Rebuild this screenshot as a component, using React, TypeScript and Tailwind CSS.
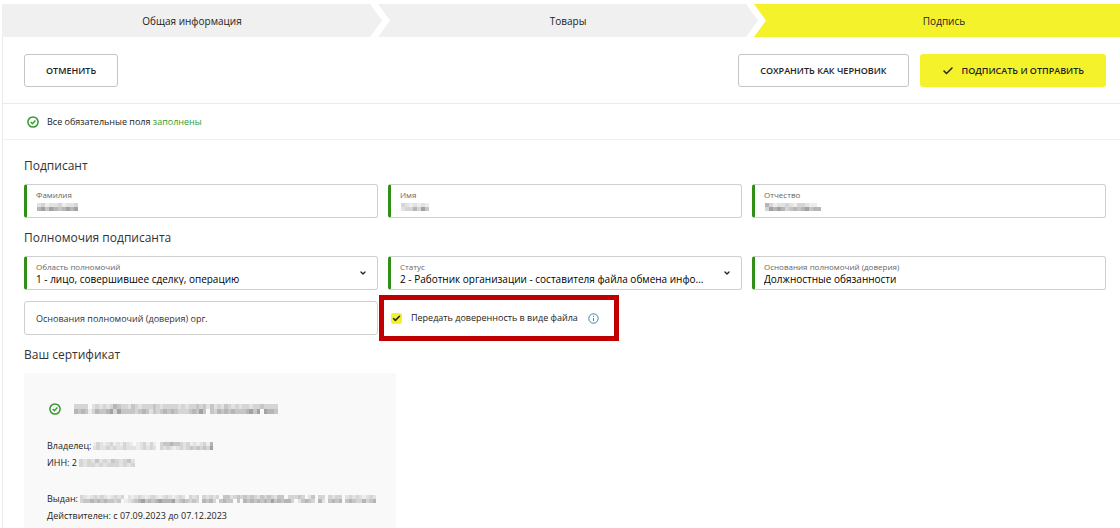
import React, { useId, useState } from "react";
import { Check, ChevronDown } from "lucide-react";

const STEPS = ["Общая информация", "Товары", "Подпись"];

// one digit per mosaic cell, 0 = empty, 7 = darkest
const MASKS = {
  surname: ["2312231223", "5646545656"],
  firstName: ["3212121", "2335364"],
  patronymic: ["53122321332110", "36565345456455"],
  certificate: [
    "333302323235433243233343233332323343424232432323323343333",
    "545413544563644443454243454543334546404354545444564606554",
  ],
  owner: ["132123121321012313103445443231212315", "232232322322212323203232123234343436"],
  inn: ["32324232432342", "32332323332323"],
  issuer: [
    "321232321232302123212321232123203230323230442343434324343244033343024033032330232321232",
    "344545454434012345645456555634543430545304544040545454546454553024543052045450454335345",
  ],
};

const SHADES: Record<string, string> = {
  "1": "#ededed",
  "2": "#e2e2e2",
  "3": "#d5d5d5",
  "4": "#c6c6c6",
  "5": "#b6b6b6",
  "6": "#a2a2a2",
  "7": "#909090",
};

function Mosaic({ rows, width, height = 8 }: { rows: string[]; width: number; height?: number }) {
  return (
    <svg
      width={width}
      height={height}
      viewBox={`0 0 ${rows[0].length} ${rows.length}`}
      preserveAspectRatio="none"
      shapeRendering="crispEdges"
      className="shrink-0"
      aria-hidden="true"
    >
      {rows.map((row, y) =>
        row.split("").map((c, x) => (c === "0" ? null : <rect key={`${x}-${y}`} x={x} y={y} width="1" height="1" fill={SHADES[c]} />)),
      )}
    </svg>
  );
}

function OkIcon() {
  return (
    <svg width="12" height="12" viewBox="0 0 12 12" fill="none" stroke="#35992b" className="shrink-0" aria-hidden="true">
      <circle cx="6" cy="6" r="5.1" strokeWidth="1.5" />
      <path d="M3.7 6.1 5.4 7.7 8.4 4.6" strokeWidth="1.4" />
    </svg>
  );
}

function Steps() {
  return (
    <nav className="overflow-hidden pt-1">
      <ol className="-mr-[14px] flex">
        {STEPS.map((step, i) => {
          const first = i === 0;
          const active = i === STEPS.length - 1;
          return (
            <li
              key={step}
              className={`flex h-[33px] flex-1 items-center justify-center ${active ? "bg-[#f4f22b]" : "-mr-1 bg-[#f0f0f0]"} ${
                first
                  ? "[clip-path:polygon(0_0,calc(100%-12px)_0,100%_50%,calc(100%-12px)_100%,0_100%)]"
                  : "[clip-path:polygon(0_0,calc(100%-12px)_0,100%_50%,calc(100%-12px)_100%,0_100%,12px_50%)]"
              }`}
            >
              {step}
            </li>
          );
        })}
      </ol>
    </nav>
  );
}

type FieldProps = {
  label: string;
  value?: string;
  select?: boolean;
  mask?: string[];
  maskWidth?: number;
};

function Field({ label, value = "", select, mask, maskWidth = 0 }: FieldProps) {
  const id = useId();
  const control = "h-3 w-full appearance-none bg-transparent p-0 text-[10px] leading-3 text-black outline-none";
  return (
    <div className="relative flex h-[34px] min-w-0 flex-col justify-center rounded-[3px] border border-l-[3px] border-[#cfcfcf] border-l-[#2f8f17] pl-[9px] pr-2">
      <label htmlFor={id} className="text-[8px] leading-3 text-[#666]">
        {label}
      </label>
      {select ? (
        <>
          <select id={id} className={control} defaultValue={value}>
            <option>{value}</option>
          </select>
          <ChevronDown className="pointer-events-none absolute right-[10px] top-3 size-2" strokeWidth={4} aria-hidden="true" />
        </>
      ) : (
        <input id={id} className={control} defaultValue={value} />
      )}
      {mask && (
        <span className="pointer-events-none absolute left-[10px] top-[18px]">
          <Mosaic rows={mask} width={maskWidth} />
        </span>
      )}
    </div>
  );
}

function Heading({ children }: { children: React.ReactNode }) {
  return <h2 className="text-[12px] leading-5 text-[#333]">{children}</h2>;
}

export default function App() {
  const [asFile, setAsFile] = useState(true);
  const button = "flex h-[33px] items-center justify-center rounded-[3px] text-[9px] font-semibold";

  return (
    <div className="bg-white pl-[2px] font-['Open_Sans','Noto_Sans',sans-serif] text-[10px] leading-4 text-[#222]">
      <Steps />
      <main className="border-l border-[#ebebeb]">
        <div className="flex items-center gap-[11px] border-b border-[#ebebeb] pb-4 pl-[21px] pr-[14px] pt-[17px]">
          <button type="button" className={`${button} mr-auto border border-[#c4c4c4] px-[21px]`}>
            ОТМЕНИТЬ
          </button>
          <button type="button" className={`${button} border border-[#c4c4c4] px-[21px]`}>
            СОХРАНИТЬ КАК ЧЕРНОВИК
          </button>
          <button type="button" className={`${button} gap-2 bg-[#f4f22b] px-[22px]`}>
            <Check className="size-3" strokeWidth={3} aria-hidden="true" />
            ПОДПИСАТЬ И ОТПРАВИТЬ
          </button>
        </div>

        <div className="flex h-9 items-center gap-2 border-b border-[#f0f0f0] pl-6 text-[9px]">
          <OkIcon />
          <p>
            Все обязательные поля <span className="text-[#35992b]">заполнены</span>
          </p>
        </div>

        <form className="pl-[21px] pr-[14px] pt-4">
          <Heading>Подписант</Heading>
          <div className="mt-2 grid grid-cols-3 gap-[10px]">
            <Field label="Фамилия" mask={MASKS.surname} maskWidth={41} />
            <Field label="Имя" mask={MASKS.firstName} maskWidth={28} />
            <Field label="Отчество" mask={MASKS.patronymic} maskWidth={56} />
          </div>

          <div className="mt-[10px]">
            <Heading>Полномочия подписанта</Heading>
          </div>
          <div className="mt-2 grid grid-cols-3 gap-x-[10px] gap-y-[11px]">
            <Field label="Область полномочий" value="1 - лицо, совершившее сделку, операцию" select />
            <Field label="Статус" value="2 - Работник организации - составителя файла обмена инфо..." select />
            <Field label="Основания полномочий (доверия)" value="Должностные обязанности" />
            <input
              className="h-[34px] min-w-0 rounded-[3px] border border-[#cfcfcf] px-[11px] text-[9px] outline-none placeholder:text-[#333]"
              aria-label="Основания полномочий (доверия) орг."
              placeholder="Основания полномочий (доверия) орг."
            />
            <div className="flex h-[34px]">
              <div className="relative flex items-center pl-[3px] text-[9px]">
                <label className="flex items-center gap-[9px]">
                  <span className="relative flex size-[11px]">
                    <input
                      type="checkbox"
                      className="size-[11px] appearance-none rounded-[2px] border border-[#bbb] checked:border-[#f4f22b] checked:bg-[#f4f22b]"
                      checked={asFile}
                      onChange={(e) => setAsFile(e.target.checked)}
                    />
                    {asFile && <Check className="pointer-events-none absolute inset-px size-[9px]" strokeWidth={4} aria-hidden="true" />}
                  </span>
                  Передать доверенность в виде файла
                </label>
                <svg width="11" height="11" viewBox="0 0 11 11" fill="none" stroke="#2f86b8" className="ml-[10px]" aria-hidden="true">
                  <circle cx="5.5" cy="5.5" r="4.7" />
                  <path d="M5.5 5v3M5.5 2.8v1" />
                </svg>
                <span className="pointer-events-none absolute -left-[9px] -right-5 -inset-y-[6px] border-[5px] border-[#c00000]" />
              </div>
            </div>
          </div>
        </form>

        <section className="pl-[21px] pt-[10px]">
          <Heading>Ваш сертификат</Heading>
          <div className="mt-2 w-[372px] bg-[#f9f9f9] px-[23px] pb-1 pt-7 text-[9px] leading-[17px]">
            <div className="flex h-4 items-center gap-[13px] pl-[2px]">
              <OkIcon />
              <Mosaic rows={MASKS.certificate} width={204} height={10} />
            </div>
            <p className="mt-5 flex items-center gap-[2px]">
              Владелец: <Mosaic rows={MASKS.owner} width={120} />
            </p>
            <p className="flex items-center gap-[2px]">
              ИНН: 2<Mosaic rows={MASKS.inn} width={56} />
            </p>
            <p className="mt-[19px] flex items-center gap-[2px]">
              Выдан: <Mosaic rows={MASKS.issuer} width={296} />
            </p>
            <p>Действителен: с 07.09.2023 до 07.12.2023</p>
          </div>
        </section>
      </main>
    </div>
  );
}
